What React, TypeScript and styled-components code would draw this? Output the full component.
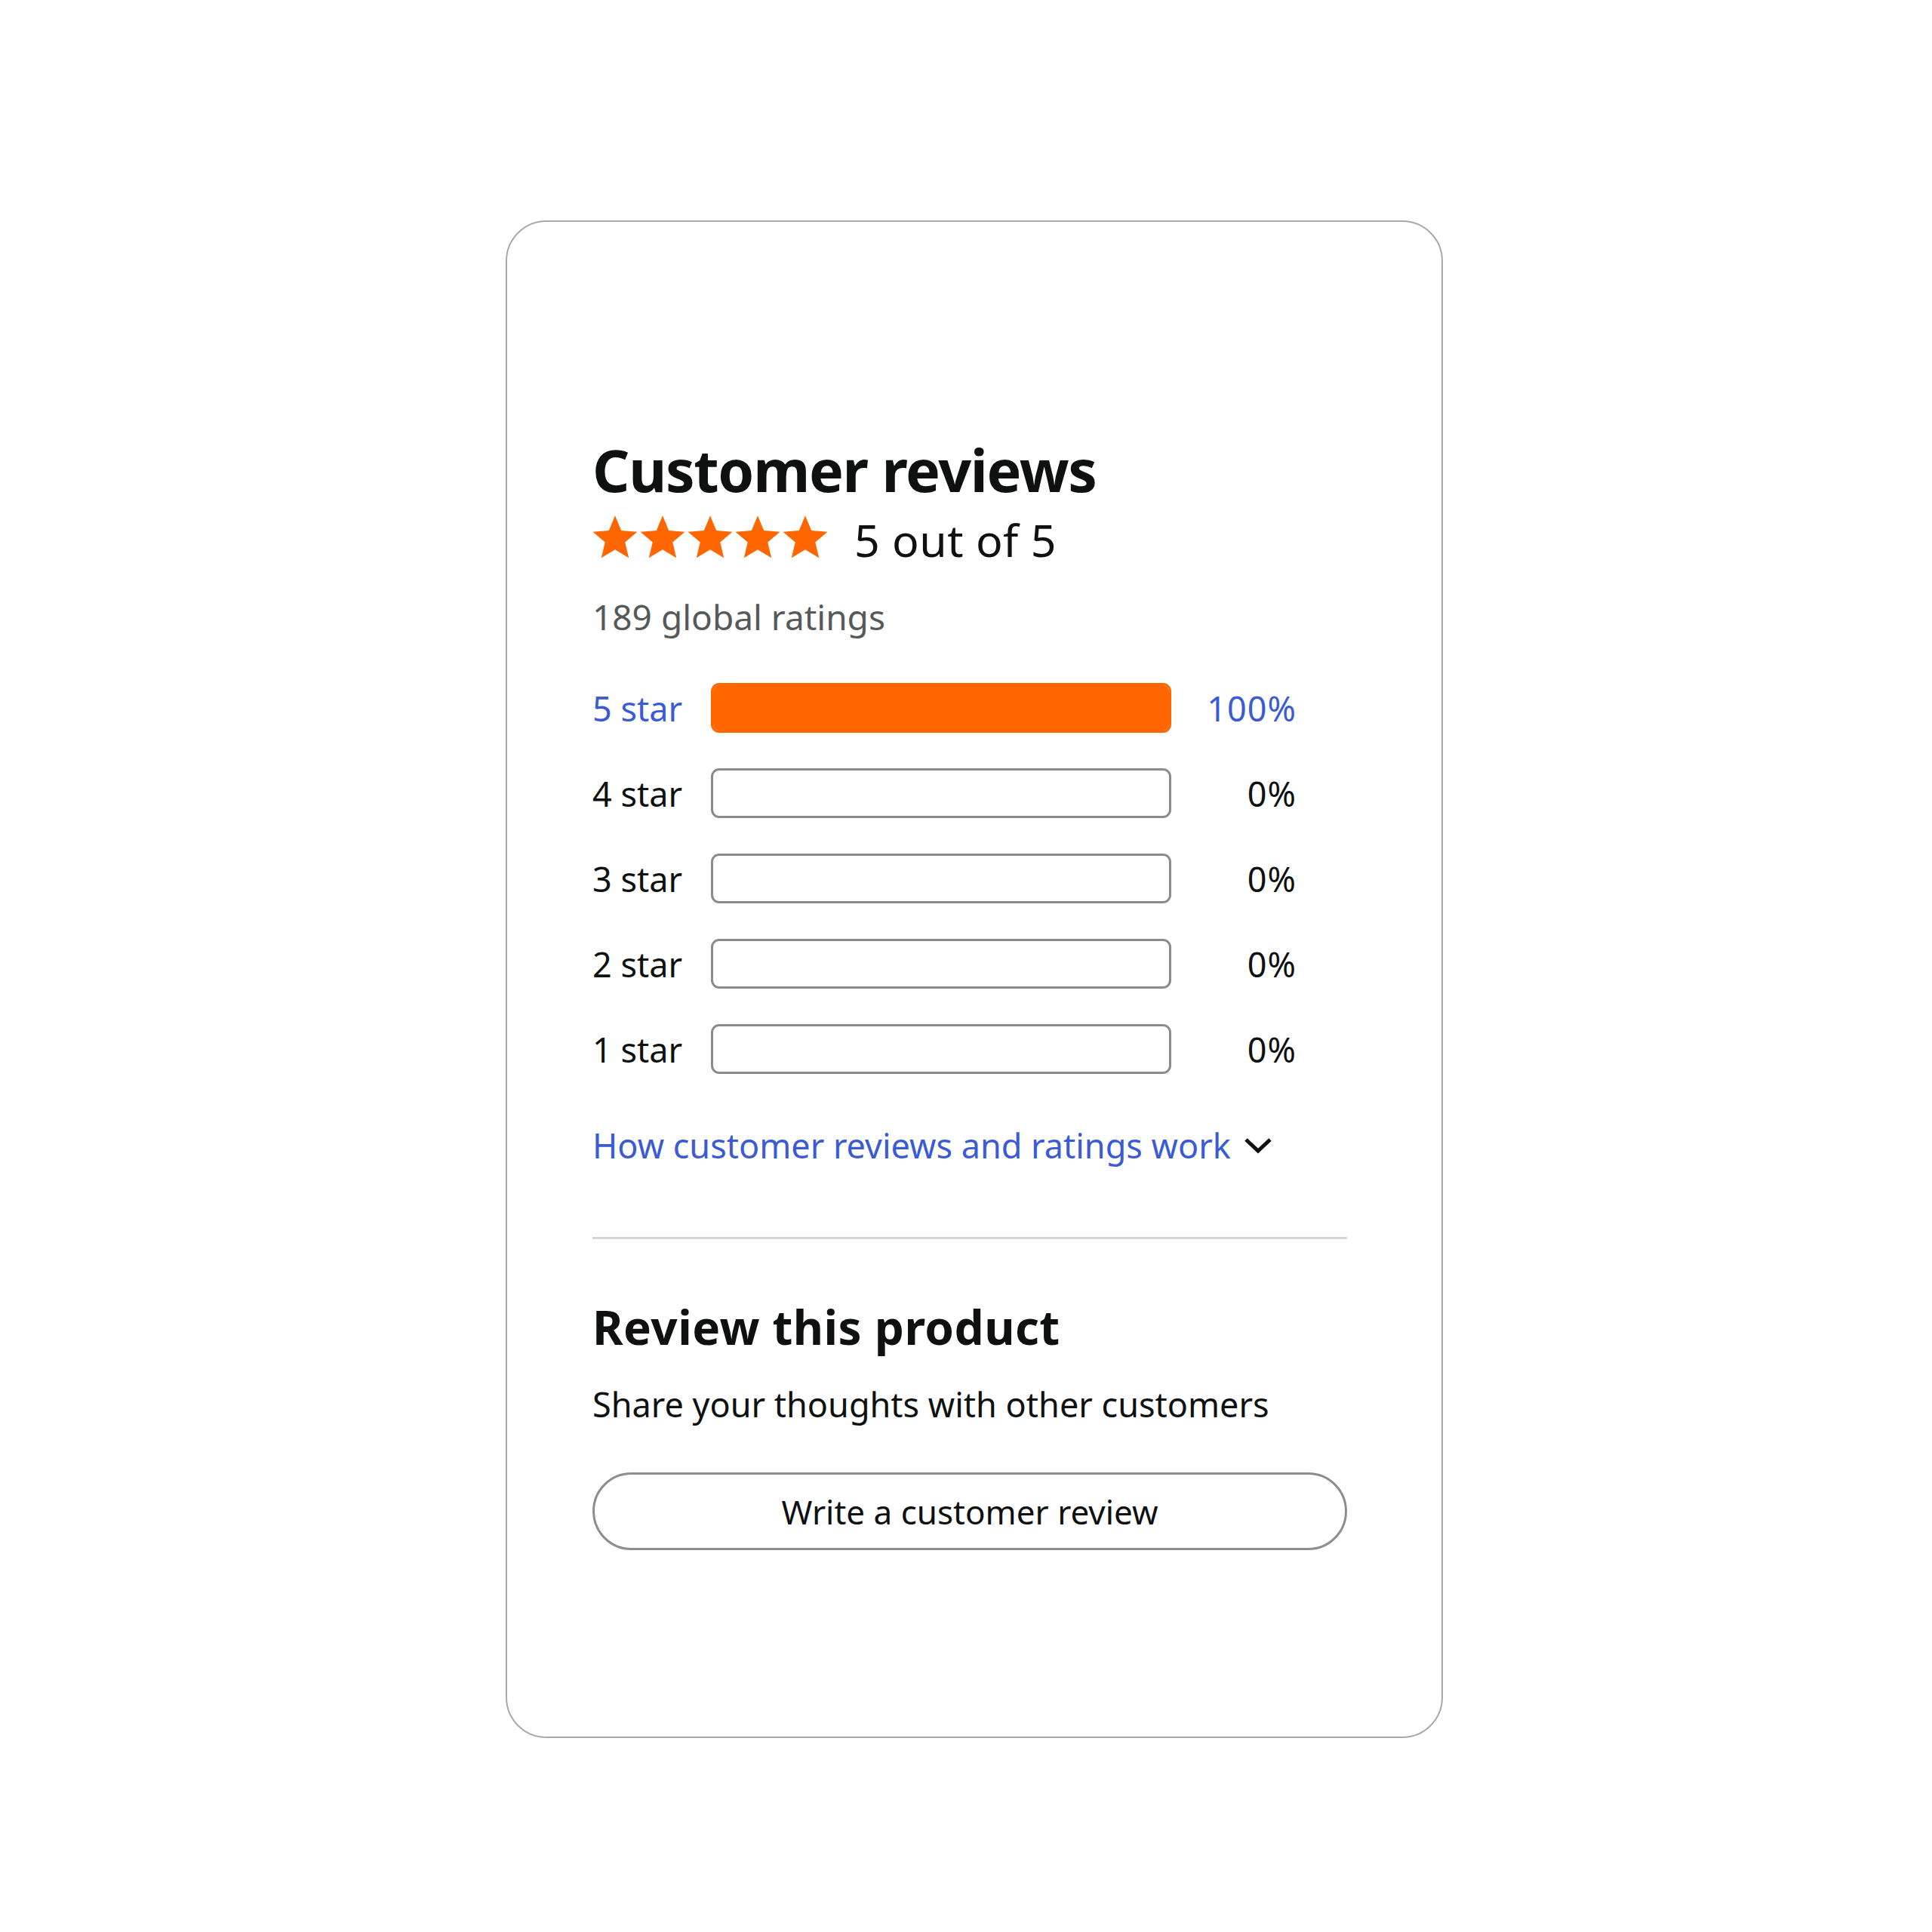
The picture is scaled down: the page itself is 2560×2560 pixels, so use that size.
import styled, { createGlobalStyle } from "styled-components";

const GlobalStyle = createGlobalStyle`
    html, body {
        margin: 0;
        padding: 0;
        background: #ffffff;
    }
    body {
        font-family: "Noto Sans", "Open Sans", Arial, sans-serif;
        color: #0f1111;
    }
`;

interface Rating {
    label: string;
    percent: number;
}

const ratings: Rating[] = [
    { label: "5 star", percent: 100 },
    { label: "4 star", percent: 0 },
    { label: "3 star", percent: 0 },
    { label: "2 star", percent: 0 },
    { label: "1 star", percent: 0 },
];

const Page = styled.div`
    width: 2560px;
    min-height: 2560px;
    box-sizing: border-box;
    padding: 292px 0 0 670px;
`;

const Card = styled.section`
    width: 1242px;
    box-sizing: border-box;
    border: 2px solid #a9a9a9;
    border-radius: 54px;
    padding: 290px 125px 247px 113px;
    display: flex;
    flex-direction: column;
`;

const Heading = styled.h2<{ $size: number; $spacing: number; $gap?: number }>`
    margin: ${props => props.$gap ?? 0}px 0 0;
    font-size: ${props => props.$size}px;
    line-height: ${props => props.$size}px;
    font-weight: 700;
    color: #0f1111;
    letter-spacing: ${props => props.$spacing}px;
`;

const StarRow = styled.div`
    display: flex;
    align-items: center;
    margin-top: 21px;
    height: 60px;
`;

const Stars = styled.div`
    display: flex;
    gap: 3px;
    margin-right: 35px;
`;

const Score = styled.span`
    font-size: 59px;
    line-height: 59px;
    letter-spacing: 0.5px;
    color: #0f1111;
    margin-top: 6px;
`;

const Muted = styled.p`
    margin: 52px 0 0;
    font-size: 46px;
    line-height: 46px;
    color: #565959;
`;

const Histogram = styled.div`
    margin-top: 65px;
    display: flex;
    flex-direction: column;
    gap: 47px;
`;

const Row = styled.div<{ $active: boolean }>`
    display: grid;
    grid-template-columns: 157px 610px 166px;
    align-items: center;
    height: 66px;
    font-size: 45px;
    line-height: 45px;
    color: ${props => (props.$active ? "#3b5bd6" : "#0f1111")};
`;

const Track = styled.div<{ $filled: boolean }>`
    height: 66px;
    box-sizing: border-box;
    border-radius: 11px;
    border: 3px solid ${props => (props.$filled ? "#ff6600" : "#8b8b8b")};
    background: #ffffff;
    overflow: hidden;
`;

const Fill = styled.div`
    height: 100%;
    background: #ff6600;
`;

const Percent = styled.span`
    text-align: right;
    letter-spacing: 1px;
`;

const HowLink = styled.a`
    margin-top: 72px;
    display: flex;
    align-items: center;
    gap: 16px;
    font-size: 45px;
    line-height: 45px;
    color: #3b5bd6;
    text-decoration: none;
    cursor: pointer;
`;

const Divider = styled.hr`
    margin: 99px 0 0;
    border: none;
    height: 3px;
    background: #d5d5d5;
    width: 1000px;
`;

const Subtext = styled.p`
    margin: 49px 0 0;
    font-size: 45px;
    line-height: 45px;
    color: #0f1111;
`;

const WriteButton = styled.button`
    margin-top: 68px;
    width: 1000px;
    height: 103px;
    box-sizing: border-box;
    border: 3px solid #8d8d8d;
    border-radius: 52px;
    background: #ffffff;
    font-family: inherit;
    font-size: 44px;
    color: #0f1111;
    display: flex;
    align-items: center;
    justify-content: center;
    cursor: pointer;
`;

const Star = () => (
    <svg width="60" height="60" viewBox="0 0 24 24">
        <polygon
            fill="#ff6600"
            points="12,0.5 15.28,8.39 23.79,9.07 17.31,14.62 19.29,22.93 12,18.48 4.71,22.93 6.69,14.62 0.21,9.07 8.72,8.39"
        />
    </svg>
);

const Chevron = () => (
    <svg width="40" height="24" viewBox="0 0 40 24">
        <polyline points="4,4 20,19 36,4" fill="none" stroke="#0f1111" strokeWidth="5" />
    </svg>
);

const App = () => {
    return (
        <>
            <GlobalStyle />
            <Page>
                <Card>
                    <Heading $size={77} $spacing={-1.3}>Customer reviews</Heading>
                    <StarRow>
                        <Stars>
                            {[0, 1, 2, 3, 4].map(i => <Star key={i} />)}
                        </Stars>
                        <Score>5 out of 5</Score>
                    </StarRow>
                    <Muted>189 global ratings</Muted>

                    <Histogram>
                        {ratings.map(r => (
                            <Row key={r.label} $active={r.percent > 0}>
                                <span>{r.label}</span>
                                <Track $filled={r.percent > 0}>
                                    <Fill style={{ width: `${r.percent}%` }} />
                                </Track>
                                <Percent>{r.percent}%</Percent>
                            </Row>
                        ))}
                    </Histogram>

                    <HowLink>
                        How customer reviews and ratings work
                        <Chevron />
                    </HowLink>

                    <Divider />

                    <Heading $size={62} $spacing={0.45} $gap={85}>Review this product</Heading>
                    <Subtext>Share your thoughts with other customers</Subtext>
                    <WriteButton>Write a customer review</WriteButton>
                </Card>
            </Page>
        </>
    );
};

export default App;
